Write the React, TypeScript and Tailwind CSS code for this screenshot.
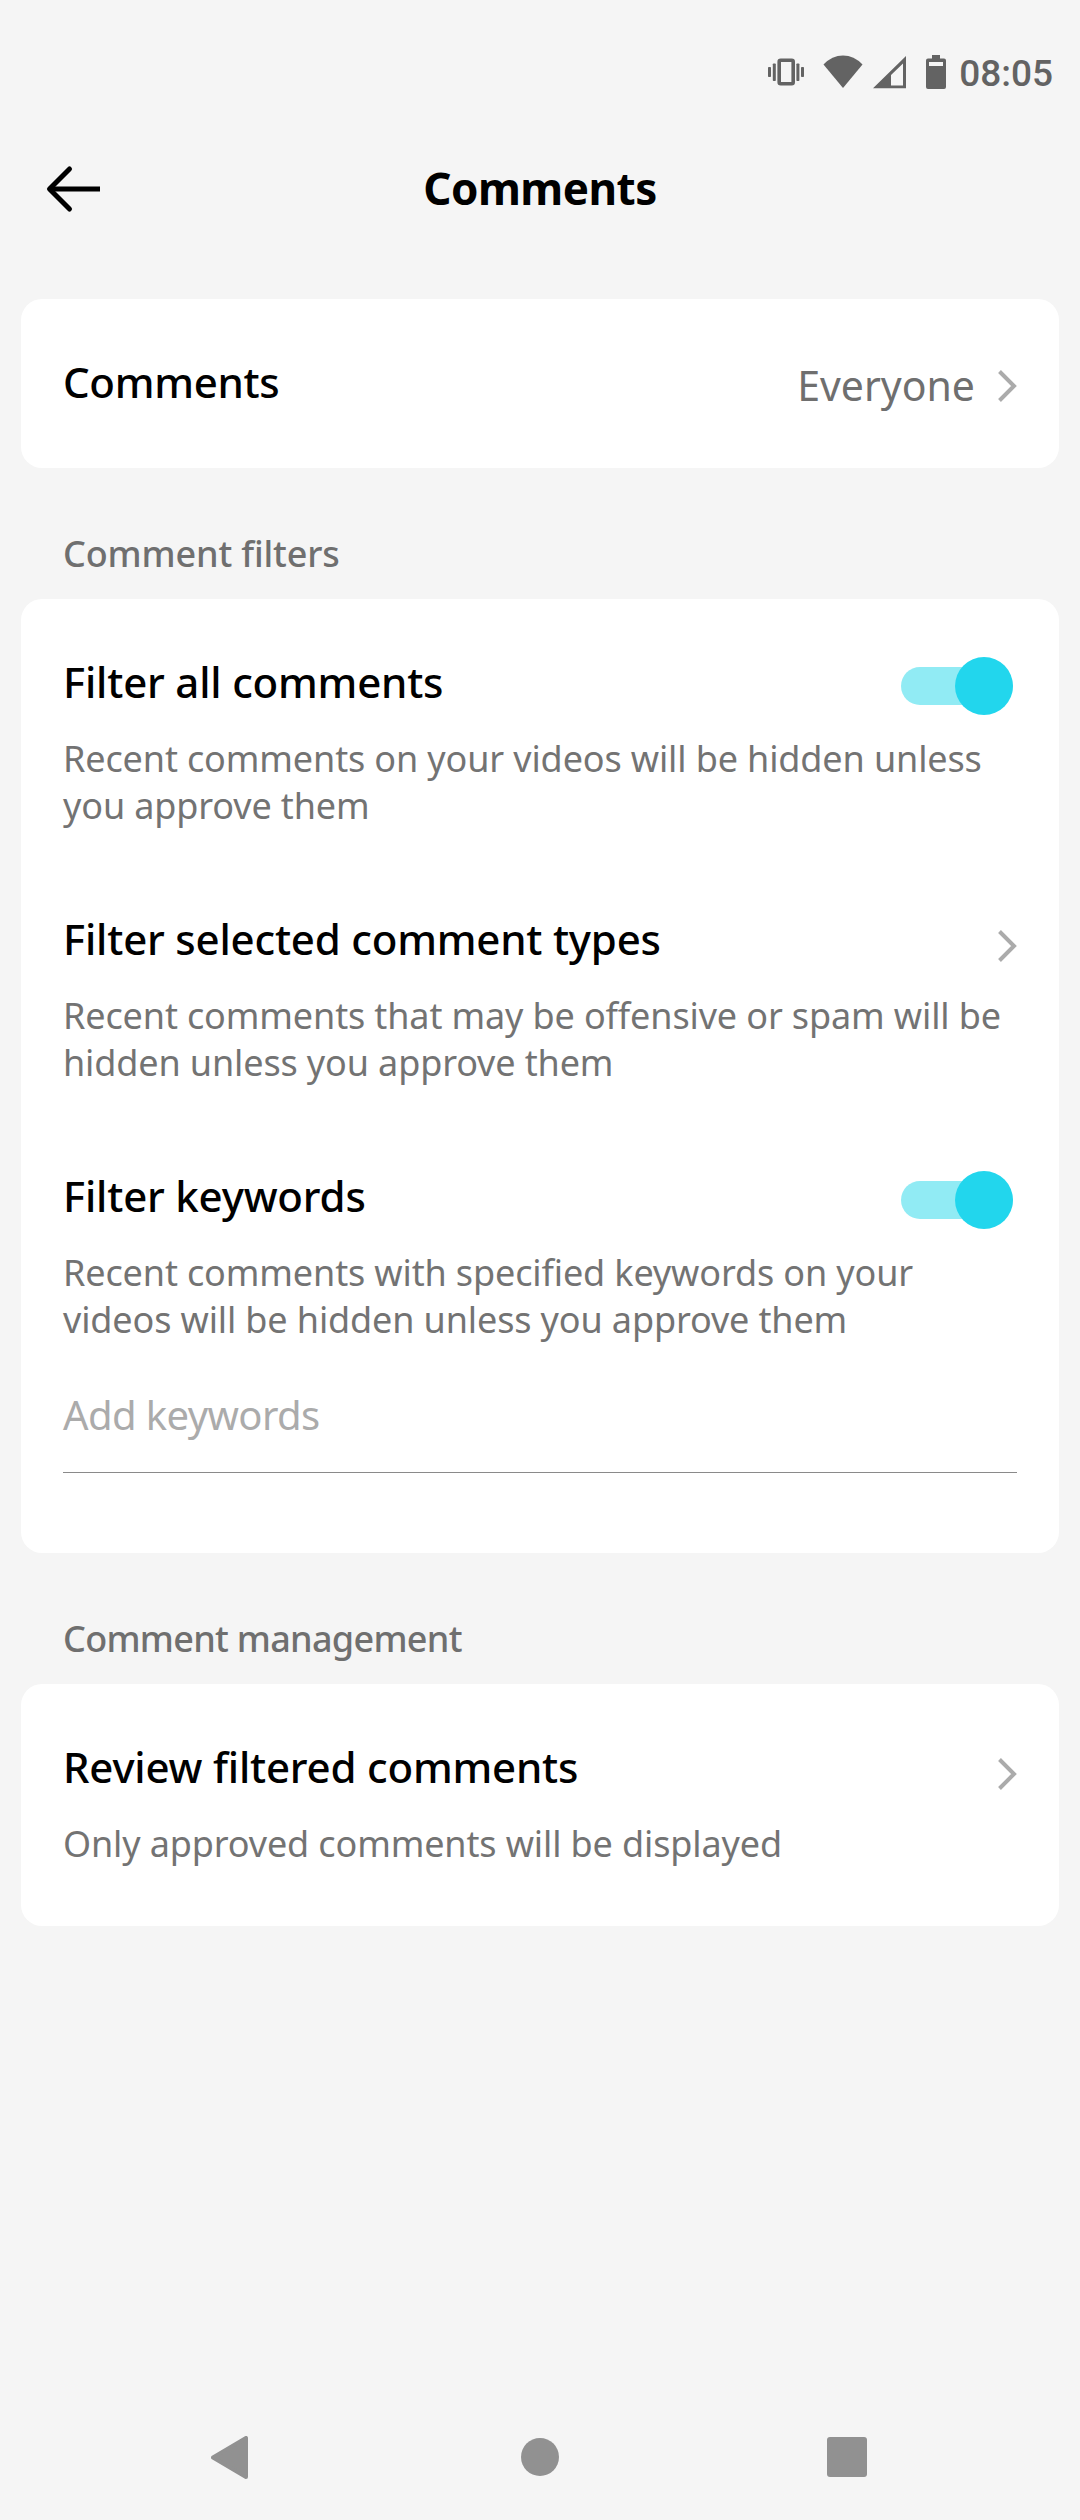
import { useState, type ReactNode } from "react";

function StatusBar() {
  return (
    <div className="flex h-36 items-center justify-end pr-[27px] text-[#636363]">
      <svg width="36" height="28" viewBox="0 0 36 28" fill="currentColor" className="mr-[19px]">
        <rect x="11.2" y="2.2" width="14" height="23.6" rx="1.5" fill="none" stroke="currentColor" strokeWidth="3.6" />
        <rect x="0" y="9" width="3" height="10" rx="0.8" />
        <rect x="4.8" y="5.5" width="3" height="17.5" rx="0.8" />
        <rect x="28.4" y="5.5" width="3" height="17.5" rx="0.8" />
        <rect x="33" y="9" width="3" height="10" rx="0.8" />
      </svg>
      <svg width="40" height="34" viewBox="0 0 40 34" fill="currentColor" className="mr-2.5">
        <path d="M20 33 0.500 9.500Q9 0.500 20 0.500T39.500 9.500Z" />
      </svg>
      <svg width="33" height="34" viewBox="0 0 33 34" fill="currentColor" className="mr-5">
        <path fillRule="evenodd" d="M0 33.300H33V1ZM18 30.500V20L30 8.500V30.500Z" />
      </svg>
      <svg width="20" height="36" viewBox="0 0 20 36" fill="currentColor" className="mr-[13px]">
        <path
          fillRule="evenodd"
          d="M6 1H14V4.500H18Q20 4.500 20 6.500V33Q20 35 18 35H2Q0 35 0 33V6.500Q0 4.500 2 4.500H6ZM3 8V12H17V8Z"
        />
      </svg>
      <span className="mt-1 font-[Roboto,sans-serif] text-[37px] leading-10 font-medium">08:05</span>
    </div>
  );
}

function Header() {
  return (
    <div className="grid h-[89px] grid-cols-[160px_1fr_160px] items-center">
      <svg
        width="56"
        height="50"
        viewBox="0 0 56 50"
        fill="none"
        stroke="currentColor"
        strokeWidth="5"
        strokeLinecap="round"
        strokeLinejoin="round"
        className="ml-[45px]"
      >
        <path d="M24.500 5 4.500 25 24.500 45" />
        <path d="M5 25H55" strokeLinecap="butt" />
      </svg>
      <h1 className="pb-px text-center text-[44px] leading-14 font-bold tracking-[-0.5px]">Comments</h1>
    </div>
  );
}

function Chevron() {
  return (
    <svg width="19" height="32" viewBox="0 0 19 32" fill="none" stroke="#ababab" strokeWidth="4">
      <path d="M1.500 1.500 16 16 1.500 30.500" />
    </svg>
  );
}

function Toggle() {
  const [on, setOn] = useState(true);

  return (
    <button
      role="switch"
      aria-checked={on}
      onClick={() => setOn(!on)}
      className={`mt-2 mr-1 flex h-[38px] w-[112px] items-center rounded-full ${
        on ? "justify-end bg-[#91ebf4]" : "justify-start bg-gray-300"
      }`}
    >
      <span className={`size-[58px] shrink-0 rounded-full ${on ? "bg-[#22d6ed]" : "bg-white"}`} />
    </button>
  );
}

function SectionLabel({ className, children }: { className: string; children: ReactNode }) {
  return (
    <h2
      className={`flex h-[131px] items-end px-[42px] pb-[22px] text-[36px] leading-[47px] font-medium text-[#6f6f6f] ${className}`}
    >
      {children}
    </h2>
  );
}

function Setting({ title, desc, action }: { title: string; desc: string; action: ReactNode }) {
  return (
    <div>
      <div className="flex h-14 items-center justify-between">
        <h3 className="text-[42px] leading-14 font-medium tracking-[-0.2px]">{title}</h3>
        {action}
      </div>
      <p className="mt-[25px] text-[36px] leading-[47px] tracking-[-0.13px] text-[#737373]">{desc}</p>
    </div>
  );
}

export default function App() {
  return (
    <div className="flex h-[2520px] w-[1080px] flex-col bg-[#f5f5f5] font-['Noto_Sans',sans-serif] text-black">
      <StatusBar />
      <Header />

      <main className="mt-[66px] flex-1 px-[21px]">
        <div className="flex h-[169px] items-center justify-between rounded-[21px] bg-white px-[42px]">
          <span className="pb-[3px] text-[42px] leading-14 font-medium tracking-[-0.3px]">Comments</span>
          <div className="flex items-center gap-[23px] pt-1">
            <span className="pb-px text-[41px] leading-14 text-[#6f6f6f]">Everyone</span>
            <Chevron />
          </div>
        </div>

        <SectionLabel className="tracking-[-0.15px]">Comment filters</SectionLabel>
        <div className="h-[954px] rounded-[21px] bg-white px-[42px] pt-[55px]">
          <div className="flex flex-col gap-[82px]">
            <Setting
              title="Filter all comments"
              desc="Recent comments on your videos will be hidden unless you approve them"
              action={<Toggle />}
            />
            <Setting
              title="Filter selected comment types"
              desc="Recent comments that may be offensive or spam will be hidden unless you approve them"
              action={<div className="mt-3.5"><Chevron /></div>}
            />
            <Setting
              title="Filter keywords"
              desc="Recent comments with specified keywords on your videos will be hidden unless you approve them"
              action={<Toggle />}
            />
          </div>
          <div className="mt-11 border-b border-[#8a8a8a] pb-[29px] text-[40px] leading-14 tracking-[-0.6px] text-[#ababab]">
            Add keywords
          </div>
        </div>

        <SectionLabel className="tracking-[-0.7px]">Comment management</SectionLabel>
        <div className="h-[242px] rounded-[21px] bg-white px-[42px] pt-[55px]">
          <Setting
            title="Review filtered comments"
            desc="Only approved comments will be displayed"
            action={<div className="mt-3.5"><Chevron /></div>}
          />
        </div>
      </main>

      <div className="flex h-[126px] items-center justify-between pr-[213px] pl-[211px] text-[#919191]">
        <svg width="37" height="43" viewBox="0 0 37 43" fill="currentColor" stroke="currentColor" strokeWidth="4" strokeLinejoin="round">
          <path d="M2 21.500 35 2V41Z" />
        </svg>
        <div className="ml-[5px] size-[38px] rounded-full bg-[#919191]" />
        <div className="size-10 rounded-[3px] bg-[#919191]" />
      </div>
    </div>
  );
}
